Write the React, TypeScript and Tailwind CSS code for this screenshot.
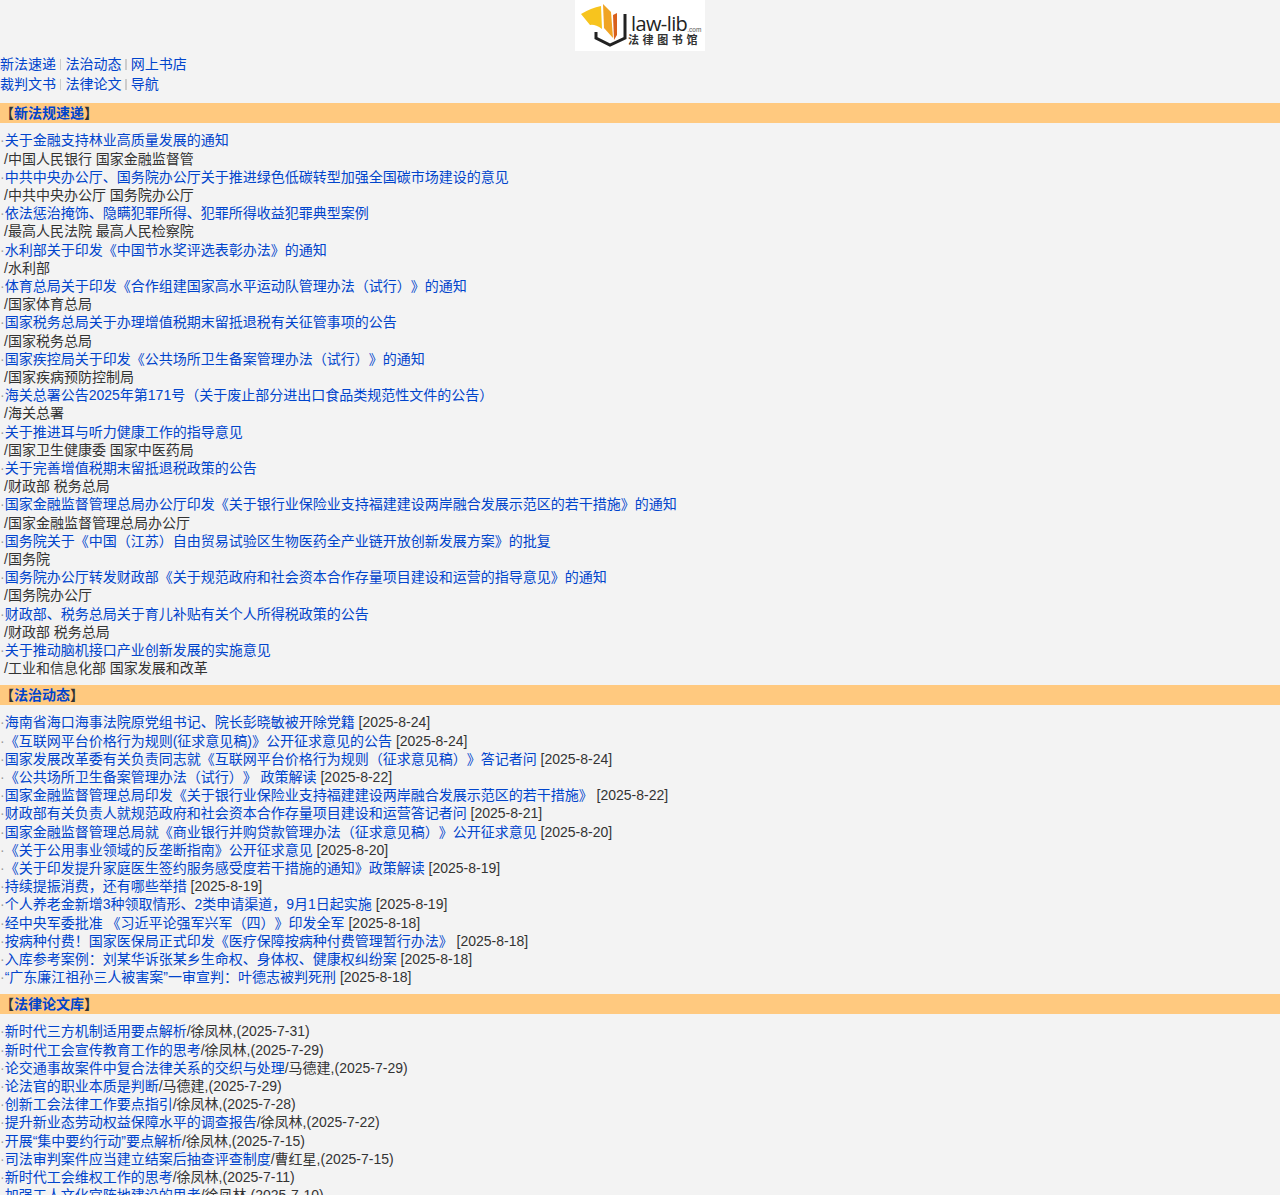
import React from 'react'

const laws = [
  ['关于金融支持林业高质量发展的通知', '中国人民银行 国家金融监督管'],
  ['中共中央办公厅、国务院办公厅关于推进绿色低碳转型加强全国碳市场建设的意见', '中共中央办公厅 国务院办公厅'],
  ['依法惩治掩饰、隐瞒犯罪所得、犯罪所得收益犯罪典型案例', '最高人民法院 最高人民检察院'],
  ['水利部关于印发《中国节水奖评选表彰办法》的通知', '水利部'],
  ['体育总局关于印发《合作组建国家高水平运动队管理办法（试行）》的通知', '国家体育总局'],
  ['国家税务总局关于办理增值税期末留抵退税有关征管事项的公告', '国家税务总局'],
  ['国家疾控局关于印发《公共场所卫生备案管理办法（试行）》的通知', '国家疾病预防控制局'],
  ['海关总署公告2025年第171号（关于废止部分进出口食品类规范性文件的公告）', '海关总署'],
  ['关于推进耳与听力健康工作的指导意见', '国家卫生健康委 国家中医药局'],
  ['关于完善增值税期末留抵退税政策的公告', '财政部 税务总局'],
  ['国家金融监督管理总局办公厅印发《关于银行业保险业支持福建建设两岸融合发展示范区的若干措施》的通知', '国家金融监督管理总局办公厅'],
  ['国务院关于《中国（江苏）自由贸易试验区生物医药全产业链开放创新发展方案》的批复', '国务院'],
  ['国务院办公厅转发财政部《关于规范政府和社会资本合作存量项目建设和运营的指导意见》的通知', '国务院办公厅'],
  ['财政部、税务总局关于育儿补贴有关个人所得税政策的公告', '财政部 税务总局'],
  ['关于推动脑机接口产业创新发展的实施意见', '工业和信息化部 国家发展和改革'],
]

const news = [
  ['海南省海口海事法院原党组书记、院长彭晓敏被开除党籍', '2025-8-24'],
  ['《互联网平台价格行为规则(征求意见稿)》公开征求意见的公告', '2025-8-24'],
  ['国家发展改革委有关负责同志就《互联网平台价格行为规则（征求意见稿）》答记者问', '2025-8-24'],
  ['《公共场所卫生备案管理办法（试行）》 政策解读', '2025-8-22'],
  ['国家金融监督管理总局印发《关于银行业保险业支持福建建设两岸融合发展示范区的若干措施》', '2025-8-22'],
  ['财政部有关负责人就规范政府和社会资本合作存量项目建设和运营答记者问', '2025-8-21'],
  ['国家金融监督管理总局就《商业银行并购贷款管理办法（征求意见稿）》公开征求意见', '2025-8-20'],
  ['《关于公用事业领域的反垄断指南》公开征求意见', '2025-8-20'],
  ['《关于印发提升家庭医生签约服务感受度若干措施的通知》政策解读', '2025-8-19'],
  ['持续提振消费，还有哪些举措', '2025-8-19'],
  ['个人养老金新增3种领取情形、2类申请渠道，9月1日起实施', '2025-8-19'],
  ['经中央军委批准 《习近平论强军兴军（四）》印发全军', '2025-8-18'],
  ['按病种付费！国家医保局正式印发《医疗保障按病种付费管理暂行办法》', '2025-8-18'],
  ['入库参考案例：刘某华诉张某乡生命权、身体权、健康权纠纷案', '2025-8-18'],
  ['“广东廉江祖孙三人被害案”一审宣判：叶德志被判死刑', '2025-8-18'],
]

const papers = [
  ['新时代三方机制适用要点解析', '徐凤林', '2025-7-31'],
  ['新时代工会宣传教育工作的思考', '徐凤林', '2025-7-29'],
  ['论交通事故案件中复合法律关系的交织与处理', '马德建', '2025-7-29'],
  ['论法官的职业本质是判断', '马德建', '2025-7-29'],
  ['创新工会法律工作要点指引', '徐凤林', '2025-7-28'],
  ['提升新业态劳动权益保障水平的调查报告', '徐凤林', '2025-7-22'],
  ['开展“集中要约行动”要点解析', '徐凤林', '2025-7-15'],
  ['司法审判案件应当建立结案后抽查评查制度', '曹红星', '2025-7-15'],
  ['新时代工会维权工作的思考', '徐凤林', '2025-7-11'],
  ['加强工人文化宫阵地建设的思考', '徐凤林', '2025-7-10'],
]

function Logo() {
  return (
    <div className="mx-auto flex h-[51px] w-[130px] items-start bg-white">
      <svg width="50" height="51" viewBox="0 0 50 51" className="ml-[6px] shrink-0">
        <path d="M0 14 Q10 8 20 6 L21 29 Q14 24 9 25 Z" fill="#f7c41e" />
        <path d="M22 4 L30 12 L32 38 L23 28 Z" fill="#f0a424" />
        <path d="M32 15 L36 13 L36 35 L33 40 Z" fill="#d8601c" />
        <path d="M15 32 V38 L29 45 L44 38 V14" fill="none" stroke="#222" strokeWidth="3" />
      </svg>
      <div className="mt-[13px] flex flex-col">
        <div className="flex items-end">
          <span className="font-['Open_Sans',sans-serif] text-[20px] leading-[21px] tracking-[-0.6px] text-[#222]">law-lib</span>
          <span className="mb-[1px] text-[6.5px] leading-none text-[#555]">.com</span>
        </div>
        <span className="ml-[-3px] text-[11px] leading-[12px] font-bold tracking-[3.6px] text-[#333]">法律图书馆</span>
      </div>
    </div>
  )
}

function Band({ title }: { title: string }) {
  return (
    <div className="mt-2 h-5 bg-[#ffc97f] text-sm leading-5 font-bold text-[#333]">
      【<a className="text-[#0044cc]">{title}</a>】
    </div>
  )
}

function Dot() {
  return <span className="text-[#999]">·</span>
}

function NavRow({ items }: { items: string[] }) {
  return (
    <div className="flex h-5 items-center text-sm text-[#0044cc]">
      {items.map((item, i) => (
        <React.Fragment key={item}>
          {i > 0 && <span className="mx-[4px] h-[11px] w-[1.4px] bg-[#cccccc]" />}
          <a>{item}</a>
        </React.Fragment>
      ))}
    </div>
  )
}

export default function App() {
  return (
    <div className="h-[1195px] overflow-hidden bg-[#f3f3f3] font-['Liberation_Sans','Noto_Sans_CJK_SC',sans-serif] text-sm leading-[18.2px] text-[#333] [text-spacing-trim:space-all]">
      <Logo />
      <div className="pt-[3px] pb-px">
        <NavRow items={['新法速递', '法治动态', '网上书店']} />
        <NavRow items={['裁判文书', '法律论文', '导航']} />
      </div>

      <Band title="新法规速递" />
      <div className="mb-[-0.3px] pt-[8.3px]">
        {laws.map(([title, from]) => (
          <div key={title}>
            <div><Dot /><a className="text-[#0044cc]">{title}</a></div>
            <div className="pl-1">/{from}</div>
          </div>
        ))}
      </div>

      <Band title="法治动态" />
      <div className="mb-[-0.3px] pt-[8.3px]">
        {news.map(([title, date]) => (
          <div key={title}>
            <Dot /><a className="text-[#0044cc]">{title}</a> [{date}]
          </div>
        ))}
      </div>

      <Band title="法律论文库" />
      <div className="pt-[8.3px]">
        {papers.map(([title, author, date]) => (
          <div key={title}>
            <Dot /><a className="text-[#0044cc]">{title}</a>/{author},({date})
          </div>
        ))}
      </div>
    </div>
  )
}
